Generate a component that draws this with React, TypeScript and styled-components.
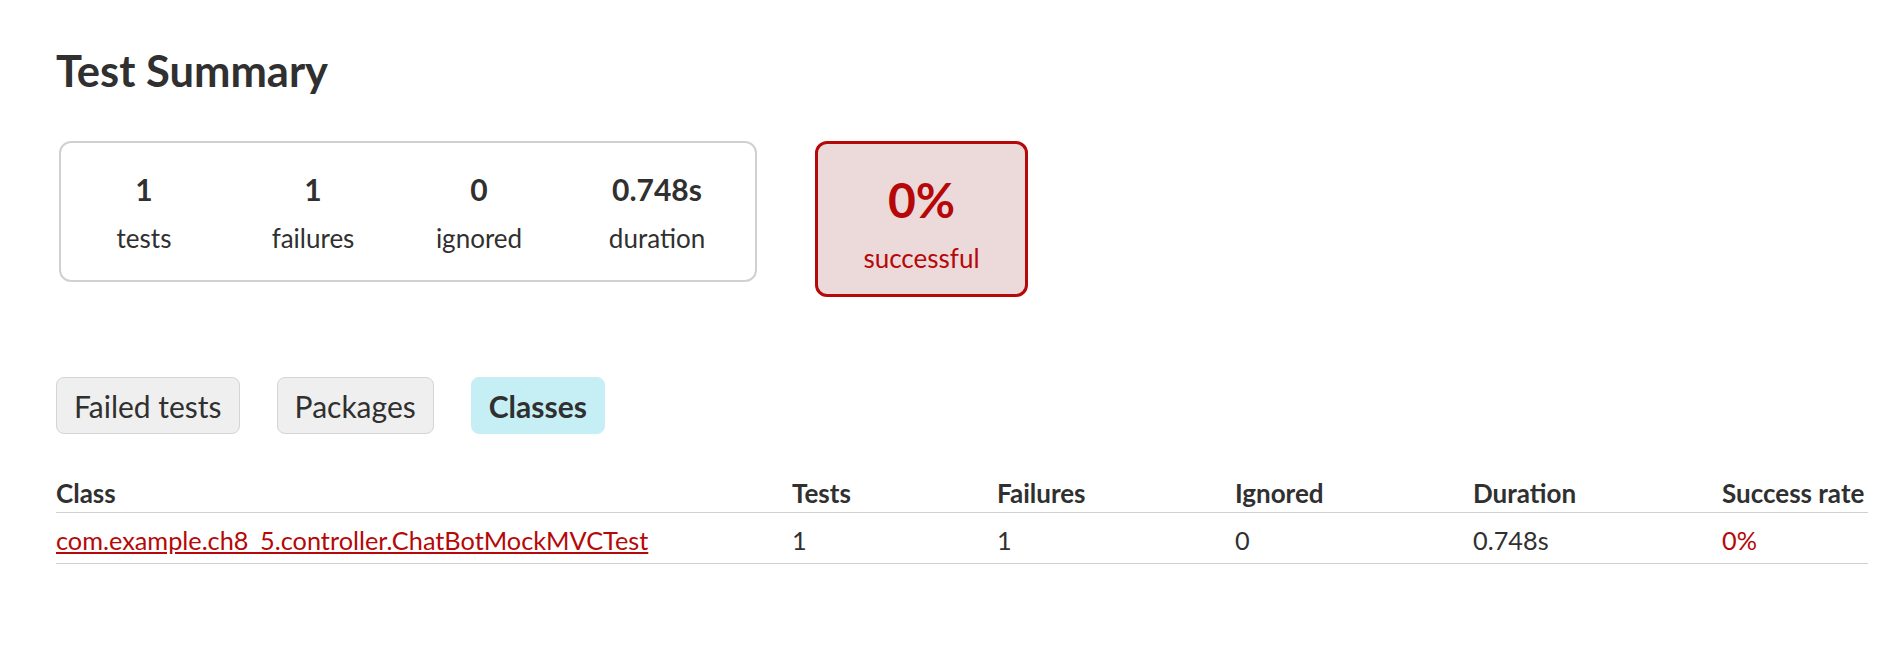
import styled, { createGlobalStyle } from "styled-components"

const GlobalStyle = createGlobalStyle`
  html, body {
    margin: 0;
    padding: 0;
    background: #ffffff;
  }
  body {
    font-family: Lato, "Noto Sans", "Liberation Sans", sans-serif;
    color: #303030;
  }
`

const Page = styled.div`
  padding: 47px 11px 40px 56px;
`

const Title = styled.h1`
  margin: 0;
  font-size: 43.5px;
  line-height: 46px;
  font-weight: 700;
  color: #303030;
`

const SummaryRow = styled.div`
  display: flex;
  align-items: flex-start;
  gap: 58px;
  margin-top: 48px;
  padding-left: 3px;
`

const CounterGroup = styled.div`
  display: grid;
  grid-template-columns: 166px 172px 160px 196px;
  width: 698px;
  box-sizing: border-box;
  border: 2px solid #d0d0d0;
  border-radius: 12px;
  padding: 29px 0 27px;
`

const InfoBox = styled.div`
  display: flex;
  flex-direction: column;
  align-items: center;
  gap: 17px;
`

const Counter = styled.div`
  font-size: 30px;
  line-height: 34px;
  font-weight: 700;
`

const Label = styled.div`
  font-size: 26px;
  line-height: 30px;
`

const RateBox = styled.div`
  width: 213px;
  box-sizing: border-box;
  border: 3px solid #b60808;
  border-radius: 12px;
  background: #ecdadb;
  color: #b60808;
  padding: 32px 0 21px;
  display: flex;
  flex-direction: column;
  align-items: center;
  gap: 19px;
`

const RateValue = styled.div`
  font-size: 48px;
  line-height: 48px;
  font-weight: 700;
`

const Tabs = styled.div`
  display: flex;
  gap: 37px;
  margin-top: 80px;
`

const Tab = styled.div<{ $active?: boolean }>`
  height: 57px;
  box-sizing: border-box;
  padding: 0 17px;
  display: flex;
  align-items: center;
  border-radius: 8px;
  font-size: 30px;
  font-weight: ${({ $active }) => ($active ? 700 : 400)};
  background: ${({ $active }) => ($active ? "#c5eff5" : "#efefef")};
  border: 1px solid ${({ $active }) => ($active ? "#c5eff5" : "#d4d4d4")};
`

const Table = styled.table`
  width: 100%;
  margin-top: 44px;
  border-collapse: collapse;
  font-size: 25.3px;
  line-height: 30px;
  table-layout: fixed;
`

const HeadCell = styled.th<{ $w: number }>`
  width: ${({ $w }) => $w}px;
  text-align: left;
  font-size: 26px;
  font-weight: 700;
  padding: 0 0 4px;
  border-bottom: 1px solid #d0d0d0;
  white-space: nowrap;
`

const Cell = styled.td<{ $fail?: boolean }>`
  padding: 12px 0 8px;
  border-bottom: 1px solid #d0d0d0;
  color: ${({ $fail }) => ($fail ? "#b60808" : "#303030")};
  white-space: nowrap;
`

const ClassLink = styled.a`
  color: #b60808;
  text-decoration: underline;
`

const counters = [
  { value: "1", label: "tests" },
  { value: "1", label: "failures" },
  { value: "0", label: "ignored" },
  { value: "0.748s", label: "duration" },
]

const columns = [
  { name: "Class", w: 736 },
  { name: "Tests", w: 205 },
  { name: "Failures", w: 238 },
  { name: "Ignored", w: 238 },
  { name: "Duration", w: 249 },
  { name: "Success rate", w: 146 },
]

export default function App() {
  return (
    <>
      <GlobalStyle />
      <Page>
        <Title>Test Summary</Title>
        <SummaryRow>
          <CounterGroup>
            {counters.map((c) => (
              <InfoBox key={c.label}>
                <Counter>{c.value}</Counter>
                <Label>{c.label}</Label>
              </InfoBox>
            ))}
          </CounterGroup>
          <RateBox>
            <RateValue>0%</RateValue>
            <Label>successful</Label>
          </RateBox>
        </SummaryRow>
        <Tabs>
          <Tab>Failed tests</Tab>
          <Tab>Packages</Tab>
          <Tab $active>Classes</Tab>
        </Tabs>
        <Table>
          <thead>
            <tr>
              {columns.map((c) => (
                <HeadCell key={c.name} $w={c.w}>{c.name}</HeadCell>
              ))}
            </tr>
          </thead>
          <tbody>
            <tr>
              <Cell>
                <ClassLink href="#">com.example.ch8_5.controller.ChatBotMockMVCTest</ClassLink>
              </Cell>
              <Cell>1</Cell>
              <Cell>1</Cell>
              <Cell>0</Cell>
              <Cell>0.748s</Cell>
              <Cell $fail>0%</Cell>
            </tr>
          </tbody>
        </Table>
      </Page>
    </>
  )
}
